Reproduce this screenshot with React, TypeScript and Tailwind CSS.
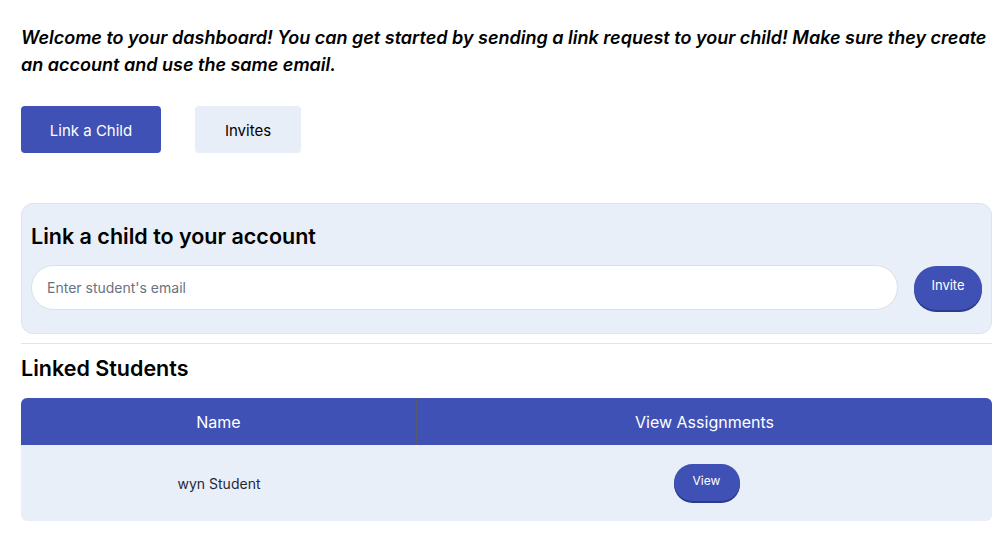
import React from 'react';

const App = () => {
  const students = [{ name: 'wyn Student' }];

  return (
    <div className="min-h-screen bg-white pl-[21px] pr-[15px] pt-[24px] text-black" style={{ fontFamily: 'Inter, "Noto Sans", sans-serif' }}>
      <p className="text-[18px] leading-[27px] font-semibold italic">
        Welcome to your dashboard! You can get started by sending a link request to your child! Make sure they create an account and use the same email.
      </p>

      {/* Tab buttons */}
      <div className="mt-[28px] flex gap-[34px]">
        <button className="h-[47px] w-[140px] rounded-[4px] bg-[#3f51b5] pt-[3px] text-[15px] text-white">Link a Child</button>
        <button className="h-[47px] w-[106px] rounded-[4px] bg-[#e8eef8] pt-[3px] text-[15px] text-black">Invites</button>
      </div>

      {/* Link card */}
      <div className="mt-[50px] rounded-[12px] border border-[#dfe3ea] bg-[#e9eff8] pl-[9px] pr-[9px] pt-[17px] pb-[23px]">
        <h2 className="text-[21.5px] leading-[30px] font-semibold">Link a child to your account</h2>
        <div className="mt-[14px] flex items-center gap-[16px]">
          <input
            className="h-[45px] flex-1 rounded-full border border-[#dcdfe4] bg-white px-[15px] text-[14px] outline-none placeholder:text-[#6b7280]"
            placeholder="Enter student's email"
          />
          <button className="h-[44px] w-[68px] rounded-full bg-[#3f51b5] pb-[4px] text-[13px] text-white shadow-[0_2px_0_#2c3a8c]">Invite</button>
        </div>
      </div>

      <div className="mt-[9px] h-px bg-[#e2e4e8]" />

      <h2 className="mt-[11px] text-[21.5px] leading-[26px] font-semibold">Linked Students</h2>

      {/* Students table */}
      <div className="mt-[17px] overflow-hidden rounded-[6px]">
        <div className="grid h-[47px] grid-cols-[396px_1fr] bg-[#3f51b5] text-[16px] text-white">
          <div className="flex items-center justify-center border-r border-[#5a5a6e]">Name</div>
          <div className="flex items-center justify-center">View Assignments</div>
        </div>
        {students.map((s, i) => (
          <div key={i} className="grid h-[76px] grid-cols-[396px_1fr] bg-[#e9eff8] text-[14px]">
            <div className="flex items-center justify-center text-[#1f2937]">{s.name}</div>
            <div className="flex items-center justify-center">
              <button className="-mt-[2px] ml-[4px] h-[37px] w-[66px] rounded-full bg-[#3f51b5] pb-[3px] text-[12px] text-white shadow-[0_2px_0_#2c3a8c]">View</button>
            </div>
          </div>
        ))}
      </div>
    </div>
  );
};

export default App;
